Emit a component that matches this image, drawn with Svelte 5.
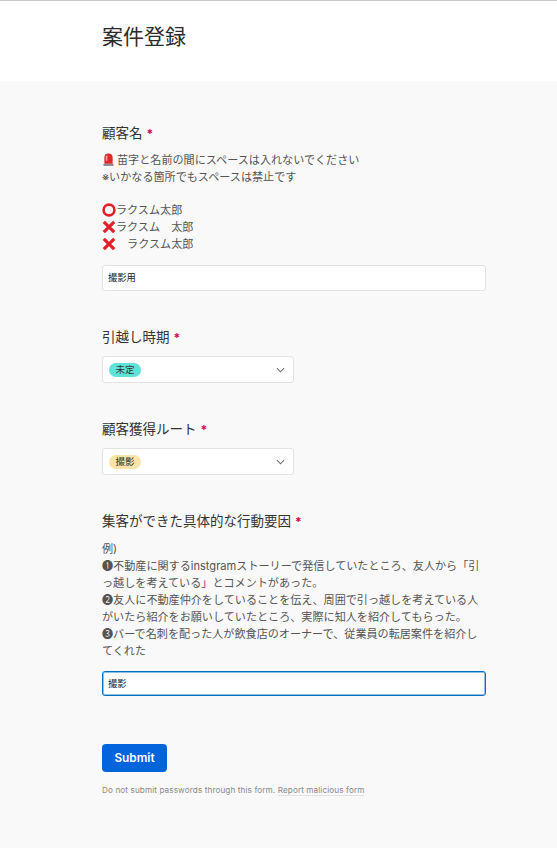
<script>
  // Static form page: each field is a label, optional help lines and a control.
  const nameRules = [
    { icon: 'ok', text: 'ラクスム太郎' },
    { icon: 'ng', text: 'ラクスム　太郎' },
    { icon: 'ng', text: '　ラクスム太郎' }
  ];
  const examples = [
    '例)',
    '❶不動産に関するinstgramストーリーで発信していたところ、友人から「引っ越しを考えている」とコメントがあった。',
    '❷友人に不動産仲介をしていることを伝え、周囲で引っ越しを考えている人がいたら紹介をお願いしていたところ、実際に知人を紹介してもらった。',
    '❸バーで名刺を配った人が飲食店のオーナーで、従業員の転居案件を紹介してくれた'
  ];
</script>

<header>
  <h1>案件登録</h1>
</header>

<main>
  <section class="field first">
    <div class="label">顧客名<span class="req">*</span></div>
    <div class="help">
      <p>
        <svg class="ico siren" viewBox="0 0 12 14">
          <rect x=".5" y="11.5" width="11" height="2.5" rx=".6" fill="#8a8f96" />
          <path d="M1.5 11.5V5a4.5 4.5 0 0 1 9 0v6.5z" fill="#dc2a2e" />
          <rect x="3" y="2.6" width="1.8" height="6" rx=".9" fill="#ff9c98" />
        </svg>苗字と名前の間にスペースは入れないでください
      </p>
      <p>※いかなる箇所でもスペースは禁止です</p>
      <p class="blank"></p>
      {#each nameRules as r}
        <p>
          {#if r.icon === 'ok'}
            <svg class="ico" viewBox="0 0 14 14"><circle cx="7" cy="7" r="5.4" fill="none" stroke="#e0202a" stroke-width="2.6" /></svg>
          {:else}
            <svg class="ico" viewBox="0 0 14 14"><path d="M1.8 1.8l10.4 10.4M12.2 1.8L1.8 12.2" stroke="#e0202a" stroke-width="3.2" fill="none" /></svg>
          {/if}{r.text}
        </p>
      {/each}
    </div>
    <div class="input">撮影用</div>
  </section>

  <section class="field">
    <div class="label">引越し時期<span class="req">*</span></div>
    <div class="select">
      <span class="tag teal">未定</span>
      <svg class="chev" viewBox="0 0 10 6"><path d="M1 1l4 4 4-4" fill="none" stroke="#6b6f76" stroke-width="1.2" /></svg>
    </div>
  </section>

  <section class="field">
    <div class="label">顧客獲得ルート<span class="req">*</span></div>
    <div class="select">
      <span class="tag sand">撮影</span>
      <svg class="chev" viewBox="0 0 10 6"><path d="M1 1l4 4 4-4" fill="none" stroke="#6b6f76" stroke-width="1.2" /></svg>
    </div>
  </section>

  <section class="field last">
    <div class="label">集客ができた具体的な行動要因<span class="req">*</span></div>
    <div class="help">
      {#each examples as line}<p>{line}</p>{/each}
    </div>
    <div class="input focus">撮影</div>
  </section>

  <button type="button">Submit</button>
  <div class="foot">Do not submit passwords through this form. <span class="report">Report malicious form</span></div>
</main>

<style>
  :global(body){background:#f9f9f9;font-family:Inter,"Noto Sans CJK JP",sans-serif}
  header{background:#fff;border-top:1px solid #c6c6c6;height:81px;padding:0 102px;box-sizing:border-box}
  h1{margin:0;padding-top:21px;font-size:21px;line-height:30px;font-weight:400;color:#2b2b2b}
  main{padding:0 71px 0 102px;height:767px;box-sizing:border-box;overflow:hidden}
  .field{padding-top:36px}
  .field.first{padding-top:42px}
  .label{font-size:13.5px;line-height:20px;color:#333;margin-bottom:7px}
  .first .label{margin-bottom:8px}
  .last .label{margin-bottom:9px}
  .req{color:#d6004c;font-size:12px;margin-left:4px;font-weight:700}
  .help{font-size:11.1px;line-height:17px;color:#545454;margin-bottom:11px}
  .first .help{margin-bottom:12px}
  .help p{margin:0}
  .help .blank{height:16px}
  .ico{width:14px;height:14px;vertical-align:-3px}
  .siren{width:11px;height:13px;margin:0 3px 0 1px;vertical-align:-2px}
  .input{height:26px;box-sizing:border-box;border:1px solid #e3e3e3;border-radius:3px;background:#fff;padding:0 5px;
    font-size:9.3px;line-height:24px;color:#222}
  .input.focus{height:25px;border:1px solid #0070c0;box-shadow:inset 0 0 0 1px rgba(0,112,192,.45);line-height:23px}
  .select{width:192px;height:27px;box-sizing:border-box;border:1px solid #e3e3e3;border-radius:3px;background:#fff;
    display:flex;align-items:center;justify-content:space-between;padding:0 8px 0 6px;margin-top:8px}
  .tag{font-size:9.5px;line-height:14px;padding:0 6.5px;border-radius:7px;color:#333}
  .teal{background:#5fe3d8}
  .sand{background:#fbe3a9}
  .chev{width:9px;height:6px}
  button{display:block;margin-top:48px;width:65px;height:28px;border:0;border-radius:4px;background:#0265dc;color:#fff;
    font:600 11.8px Inter,sans-serif;padding:0}
  .foot{margin-top:12px;font-size:8.2px;line-height:12px;letter-spacing:.09px;color:#8a8a8a}
  .report{border-bottom:1px solid #e2e2e2}
</style>
